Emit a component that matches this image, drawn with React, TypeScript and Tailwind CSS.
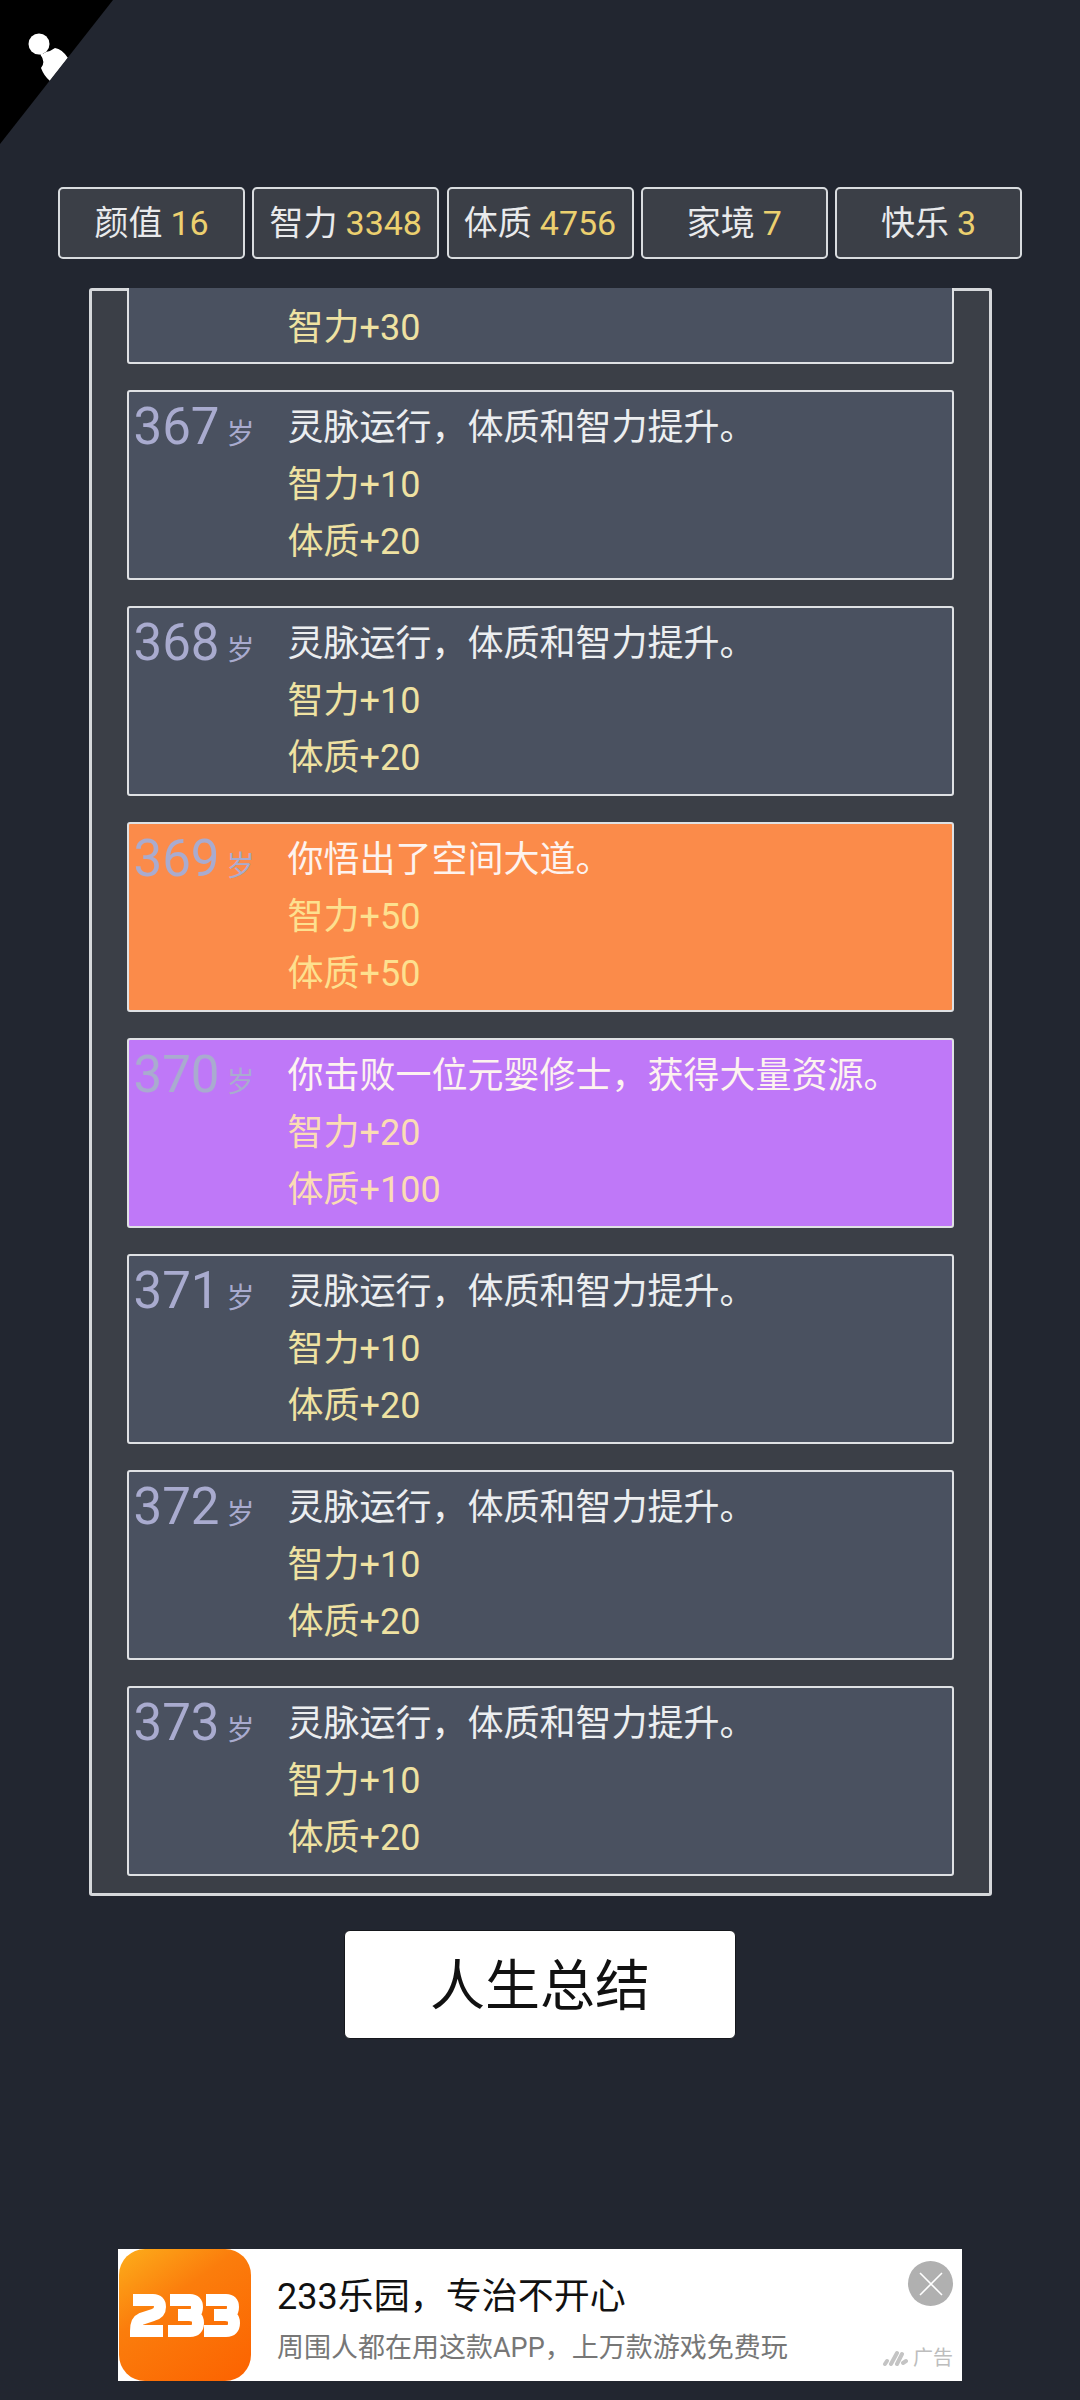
const FONT = "font-['Roboto','Noto_Sans_CJK_SC',sans-serif]";

const stats = [
  ["颜值", "16"],
  ["智力", "3348"],
  ["体质", "4756"],
  ["家境", "7"],
  ["快乐", "3"],
];

type Row = { age: number; text: string; fx: string[]; tone: "plain" | "orange" | "purple" };

const plain = "灵脉运行，体质和智力提升。";
const rows: Row[] = [
  { age: 367, text: plain, fx: ["智力+10", "体质+20"], tone: "plain" },
  { age: 368, text: plain, fx: ["智力+10", "体质+20"], tone: "plain" },
  { age: 369, text: "你悟出了空间大道。", fx: ["智力+50", "体质+50"], tone: "orange" },
  { age: 370, text: "你击败一位元婴修士，获得大量资源。", fx: ["智力+20", "体质+100"], tone: "purple" },
  { age: 371, text: plain, fx: ["智力+10", "体质+20"], tone: "plain" },
  { age: 372, text: plain, fx: ["智力+10", "体质+20"], tone: "plain" },
  { age: 373, text: plain, fx: ["智力+10", "体质+20"], tone: "plain" },
];

function LifeRow({ row }: { row: Row }) {
  const bg =
    row.tone === "orange" ? "bg-[#fb8b4a]" : row.tone === "purple" ? "bg-[#bf78f8]" : "bg-[#4a5160]";
  const fx =
    row.tone === "orange"
      ? "text-[#fde08f]"
      : row.tone === "purple"
        ? "text-[#fbdcb4]"
        : "text-[#efe2a2]";
  const main = row.tone === "plain" ? "text-[#eceef0]" : "text-[#fdf3ef]";
  return (
    <div className={`flex h-[190px] shrink-0 rounded-[3px] border-2 border-[#dfe1e4] ${bg} pl-[5px] pt-[6px]`}>
      <div className="flex h-[58px] w-[154px] shrink-0 items-baseline text-[#a9abcf]">
        <span className="text-[51px] leading-[58px]">{row.age}</span>
        <span className="ml-[7px] text-[28px] leading-[58px]">岁</span>
      </div>
      <div className="flex flex-col pt-[2px]">
        <div className={`text-[36px] leading-[57px] ${main}`}>{row.text}</div>
        {row.fx.map((f) => (
          <div key={f} className={`text-[36px] leading-[57px] ${fx}`}>
            {f}
          </div>
        ))}
      </div>
    </div>
  );
}

function AppLogo() {
  return (
    <div className="h-[132px] w-[132px] shrink-0 rounded-[26px] bg-[linear-gradient(145deg,#fdae1b_0%,#fb7d0c_38%,#fc6200_100%)]">
      <svg viewBox="3 5 132 132" className="h-full w-full" fill="none" stroke="#fff" strokeWidth="12">
        <path d="M17 56H37Q44 56 44 63Q44 69 37 71L25 75Q20 77 20 87H47" />
        <path d="M54 56H74Q81 56 81 63Q81 71 73 71H62M73 71Q82 71 82 79Q82 87 74 87H52" />
        <path d="M90 56H110Q117 56 117 63Q117 71 109 71H98M109 71Q118 71 118 79Q118 87 110 87H88" />
      </svg>
    </div>
  );
}

export default function App() {
  return (
    <div className={`relative flex h-[2400px] w-[1080px] flex-col items-center overflow-hidden bg-[#222630] ${FONT}`}>
      <div className="absolute left-0 top-0 h-[144px] w-[113px] bg-black [clip-path:polygon(0_0,100%_0,0_100%)]">
        <svg viewBox="0 0 113 144" className="h-full w-full" fill="#fff">
          <circle cx="39" cy="44" r="10.5" />
          <path d="M36 53Q41 56 46 52Q51 51 55 48Q62 49 68 58L50 81Q44 76 41 68Q46 62 40 54Z" />
        </svg>
      </div>

      <div className="mt-[187px] flex w-[964px] justify-between">
        {stats.map(([label, value]) => (
          <div
            key={label}
            className="flex h-[72px] w-[187px] items-center justify-center rounded-[5px] border-2 border-[#d9dcdf] bg-[#3b3f47] text-[34px] text-[#e9eaec]"
          >
            <span>{label}</span>
            <span className="ml-[8px] text-[#ecd06f]">{value}</span>
          </div>
        ))}
      </div>

      <div className="mt-[29px] h-[1608px] w-[903px] rounded-[3px] border-[3px] border-[#d6d8db] bg-[#3b3f47]">
        <div className="-mt-[3px] flex h-[1588px] flex-col justify-end gap-[26px] overflow-hidden px-[35px]">
          <div className="flex h-[190px] shrink-0 rounded-[3px] border-2 border-[#dfe1e4] bg-[#4a5160] pl-[159px]">
            <div className="mt-[124px] text-[36px] leading-[57px] text-[#efe2a2]">智力+30</div>
          </div>
          {rows.map((r) => (
            <LifeRow key={r.age} row={r} />
          ))}
        </div>
      </div>

      <button className="mt-[34px] flex h-[109px] w-[392px] items-center justify-center rounded-[6px] border border-[#15171c] bg-white pt-[4px] text-[55px] text-[#111]">
        人生总结
      </button>

      <div className="mt-[210px] flex h-[132px] w-[844px] items-stretch bg-white pl-[1px]">
        <AppLogo />
        <div className="ml-[26px] flex flex-1 flex-col">
          <div className="mt-[25px] text-[36px] leading-[46px] text-[#111]">233乐园，专治不开心</div>
          <div className="mt-[8px] text-[27px] leading-[40px] text-[#777] whitespace-nowrap">周围人都在用这款APP，上万款游戏免费玩</div>
        </div>
        <div className="mr-[9px] flex w-[90px] flex-col items-end">
          <div className="mt-[12px] flex h-[45px] w-[45px] items-center justify-center rounded-full bg-[#b0b0b0]">
            <svg viewBox="0 0 24 24" className="h-[24px] w-[24px]" stroke="#fff" strokeWidth="1.6" fill="none">
              <path d="M1 1L23 23M23 1L1 23" />
            </svg>
          </div>
          <div className="mt-[38px] flex items-center text-[#bdbdbd]">
            <svg viewBox="0 0 26 18" className="mr-[5px] h-[18px] w-[26px]" stroke="#c4c4c4" strokeWidth="4" strokeLinecap="round" fill="none">
              <path d="M3 15L5 12M9 15L15 4M15 15L20 5M21 14L24 12" />
            </svg>
            <span className="text-[20px] leading-[28px]">广告</span>
          </div>
        </div>
      </div>
    </div>
  );
}
